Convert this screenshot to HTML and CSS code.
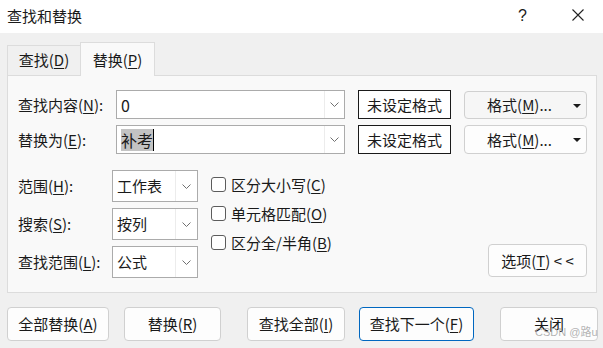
FILE: index.html
```html
<!DOCTYPE html>
<html lang="zh-CN">
<head>
    <meta charset="UTF-8">
    <title>查找和替换</title>
    <link rel="stylesheet" href="styles.css">
</head>
<body>
    <div class="titlebar">
        <div class="title">查找和替换</div>
        <div class="help">?</div>
        <div class="close">
            <svg width="12" height="12" viewBox="0 0 12 12"><path d="M0.5 0.5 L11.5 11.5 M11.5 0.5 L0.5 11.5" stroke="#222" stroke-width="1.1" fill="none"/></svg>
        </div>
    </div>

    <div class="tabs">
        <div class="tab">查找(<u>D</u>)</div>
        <div class="tab active">替换(<u>P</u>)</div>
    </div>

    <div class="panel">
        <div class="top-grid">
            <div class="label">查找内容(<u>N</u>):</div>
            <div class="combo">
                <span class="combo-text">0</span>
                <span class="combo-arrow"><svg width="9" height="5" viewBox="0 0 9 5"><polyline points="0.5,0.5 4.5,4.5 8.5,0.5" fill="none" stroke="#707070" stroke-width="1"/></svg></span>
            </div>
            <div class="preview">未设定格式</div>
            <div class="btn fmt-btn hover">
                <span>格式(<u>M</u>)...</span>
                <span class="tri"></span>
            </div>

            <div class="label">替换为(<u>E</u>):</div>
            <div class="combo">
                <span class="combo-text"><span class="sel">补考</span><span class="caret"></span></span>
                <span class="combo-arrow"><svg width="9" height="5" viewBox="0 0 9 5"><polyline points="0.5,0.5 4.5,4.5 8.5,0.5" fill="none" stroke="#707070" stroke-width="1"/></svg></span>
            </div>
            <div class="preview">未设定格式</div>
            <div class="btn fmt-btn">
                <span>格式(<u>M</u>)...</span>
                <span class="tri"></span>
            </div>
        </div>

        <div class="lower">
            <div class="opt-grid">
                <div class="label">范围(<u>H</u>):</div>
                <div class="select">
                    <span class="select-text">工作表</span>
                    <span class="select-arrow"><svg width="9" height="5" viewBox="0 0 9 5"><polyline points="0.5,0.5 4.5,4.5 8.5,0.5" fill="none" stroke="#707070" stroke-width="1"/></svg></span>
                </div>
                <div class="label">搜索(<u>S</u>):</div>
                <div class="select">
                    <span class="select-text">按列</span>
                    <span class="select-arrow"><svg width="9" height="5" viewBox="0 0 9 5"><polyline points="0.5,0.5 4.5,4.5 8.5,0.5" fill="none" stroke="#707070" stroke-width="1"/></svg></span>
                </div>
                <div class="label">查找范围(<u>L</u>):</div>
                <div class="select">
                    <span class="select-text">公式</span>
                    <span class="select-arrow"><svg width="9" height="5" viewBox="0 0 9 5"><polyline points="0.5,0.5 4.5,4.5 8.5,0.5" fill="none" stroke="#707070" stroke-width="1"/></svg></span>
                </div>
            </div>

            <div class="checks">
                <div class="check"><span class="box"></span>区分大小写(<u>C</u>)</div>
                <div class="check"><span class="box"></span>单元格匹配(<u>O</u>)</div>
                <div class="check"><span class="box"></span>区分全/半角(<u>B</u>)</div>
            </div>

            <div class="btn options-btn">选项(<u>T</u>)&nbsp;&lt; &lt;</div>
        </div>
    </div>

    <div class="footer">
        <div class="btn f1">全部替换(<u>A</u>)</div>
        <div class="btn f2">替换(<u>R</u>)</div>
        <div class="btn f3">查找全部(<u>I</u>)</div>
        <div class="btn f4 primary">查找下一个(<u>F</u>)</div>
        <div class="btn f5">关闭</div>
    </div>

    <div class="watermark">CSDN @路u</div>
</body>
</html>
```

FILE: styles.css
```css
* {
    box-sizing: border-box;
}
body {
    margin: 0;
    width: 603px;
    height: 348px;
    overflow: hidden;
    position: relative;
    background-color: #f0f0f0;
    color: #1a1a1a;
    font-family: "Noto Sans CJK SC", "Noto Sans", sans-serif;
    font-size: 15px;
    line-height: 20px;
}
u {
    text-decoration: underline;
    text-underline-offset: 2px;
    text-decoration-thickness: 1px;
}

.titlebar {
    height: 33px;
    background-color: #fff;
    display: flex;
    align-items: center;
    padding-left: 7px;
}
.title {
    flex: 1;
    margin-top: -2px;
}
.help {
    width: 14px;
    margin-right: 40px;
    margin-top: -2px;
    font-family: "Liberation Sans", sans-serif;
    font-size: 16px;
}
.close {
    width: 12px;
    height: 12px;
    margin-right: 19px;
    margin-top: -3px;
    display: flex;
}

.tabs {
    height: 42px;
    display: flex;
    align-items: flex-end;
    padding-left: 7px;
}
.tab {
    width: 73px;
    height: 30px;
    border: 1px solid #dcdcdc;
    border-bottom: none;
    border-right: none;
    display: flex;
    align-items: center;
    justify-content: center;
    padding-bottom: 1px;
}
.tab.active {
    width: 75px;
    height: 34px;
    margin-bottom: -1px;
    background-color: #f9f9f9;
    border-right: 1px solid #dcdcdc;
    position: relative;
    padding-top: 2px;
}

.panel {
    margin: 0 6px 0 7px;
    height: 218px;
    border: 1px solid #dcdcdc;
    background-color: #f9f9f9;
    padding: 14px 9px 0 10px;
}

.top-grid {
    display: grid;
    grid-template-columns: 98px 229px 106px 136px;
    grid-auto-rows: 29px;
    row-gap: 6px;
}
.label {
    display: flex;
    align-items: center;
    white-space: nowrap;
}
.combo {
    display: flex;
    background-color: #fff;
    border: 1px solid #ababab;
}
.combo-text {
    flex: 1;
    display: flex;
    align-items: center;
    padding-left: 4px;
    font-size: 16px;
}
.combo-arrow,
.select-arrow {
    width: 20px;
    display: flex;
    align-items: center;
    justify-content: center;
    border-left: 1px solid #ececec;
}
.sel {
    background-color: #c3c3c3;
    line-height: 22px;
}
.caret {
    width: 1px;
    height: 22px;
    background-color: #000;
}
.preview {
    margin-left: 13px;
    border: 1px solid #1a1a1a;
    background-color: #fff;
    display: flex;
    align-items: center;
    justify-content: center;
}

.btn {
    background-color: #fdfdfd;
    border: 1px solid #d0d0d0;
    border-radius: 4px;
    display: flex;
    align-items: center;
    justify-content: center;
}
.fmt-btn {
    margin-left: 13px;
    position: relative;
    padding-right: 12px;
}
.fmt-btn.hover {
    background-color: #f6f6f6;
    margin-top: 1px;
}
.tri {
    position: absolute;
    right: 5px;
    top: 12px;
    width: 0;
    height: 0;
    border-left: 4px solid transparent;
    border-right: 4px solid transparent;
    border-top: 4px solid #1a1a1a;
}

.lower {
    margin-top: 16px;
    display: flex;
}
.opt-grid {
    display: grid;
    grid-template-columns: 94px 86px;
    grid-auto-rows: 32px;
    row-gap: 6px;
}
.select {
    display: flex;
    border: 1px solid #ababab;
    background-color: #fff;
}
.select-text {
    flex: 1;
    display: flex;
    align-items: center;
    padding-left: 4px;
}
.select-arrow {
    width: 22px;
}
.checks {
    margin-left: 13px;
    display: flex;
    flex-direction: column;
}
.check {
    height: 29px;
    display: flex;
    align-items: center;
}
.box {
    width: 15px;
    height: 15px;
    border: 1px solid #5c5c5c;
    border-radius: 3px;
    background-color: #fff;
    margin-right: 5px;
}
.options-btn {
    margin-left: auto;
    align-self: flex-end;
    width: 99px;
    height: 33px;
    margin-bottom: 1px;
}

.footer {
    margin-top: 14px;
    display: flex;
    height: 34px;
}
.footer .btn {
    height: 34px;
}
.f1 { width: 102px; margin-left: 7px; }
.f2 { width: 97px; margin-left: 15px; }
.f3 { width: 98px; margin-left: 26px; }
.f4 { width: 115px; margin-left: 14px; }
.f5 { width: 98px; margin-left: 26px; }
.primary {
    border-color: #0067c0;
}

.watermark {
    position: absolute;
    left: 535px;
    top: 325px;
    white-space: nowrap;
    font-family: "Liberation Sans", "Noto Sans CJK SC", sans-serif;
    font-size: 11px;
    line-height: 14px;
    color: rgba(165, 165, 165, 0.85);
}
```
